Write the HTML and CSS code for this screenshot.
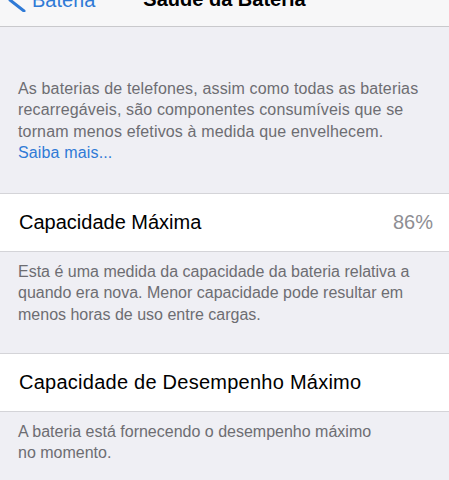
FILE: index.html
```html
<!DOCTYPE html>
<html lang="pt">
<head>
<meta charset="utf-8">
<link rel="stylesheet" href="styles.css">
</head>
<body>
<header class="nav">
  <div class="back">
    <svg class="chev" width="18" height="24" viewBox="0 0 18 24"><path d="M16 1 L2 12 L16 23" fill="none" stroke="#2f7ad6" stroke-width="3" stroke-linecap="round" stroke-linejoin="round"/></svg>
    <span class="back-label">Bateria</span>
  </div>
  <div class="title">Saúde da Bateria</div>
</header>
<main class="content">
  <p class="intro">As baterias de telefones, assim como todas as baterias recarregáveis, são componentes consumíveis que se tornam menos efetivos à medida que envelhecem.<br><span class="link">Saiba mais...</span></p>
  <div class="cell"><span class="cell-label">Capacidade Máxima</span><span class="cell-value">86%</span></div>
  <p class="footer">Esta é uma medida da capacidade da bateria relativa a quando era nova. Menor capacidade pode resultar em menos horas de uso entre cargas.</p>
  <div class="cell"><span class="cell-label wide">Capacidade de Desempenho Máximo</span></div>
  <p class="footer last">A bateria está fornecendo o desempenho máximo<br>no momento.</p>
</main>
</body>
</html>
```
FILE: styles.css
```css
html, body {
  margin: 0;
  padding: 0;
}
body {
  background: #efeff4;
  font-family: "Liberation Sans", Arial, sans-serif;
  width: 449px;
  height: 480px;
  overflow: hidden;
}
.nav {
  height: 26px;
  background: #f7f7f8;
  border-bottom: 1px solid #c9c9cc;
  position: relative;
  display: flex;
  align-items: flex-end;
}
.back {
  display: flex;
  align-items: flex-end;
  margin-left: 8px;
  margin-bottom: 14px;
  color: #2f7ad6;
  font-size: 20px;
  line-height: 20px;
}
.chev {
  display: block;
}
.back-label {
  margin-left: 6px;
  position: relative;
  top: -2px;
}
.title {
  position: absolute;
  left: 0;
  right: 0;
  bottom: 17px;
  text-align: center;
  font-size: 20px;
  line-height: 20px;
  font-weight: bold;
  color: #000;
}
.content {
  display: flex;
  flex-direction: column;
}
.intro {
  margin: 0;
  padding: 51px 24px 30px 18px;
  font-size: 16px;
  letter-spacing: 0.15px;
  line-height: 21.3px;
  color: #6d6d72;
}
.link {
  color: #2f7ad6;
}
.cell {
  background: #fff;
  border-top: 1px solid #d4d4d8;
  border-bottom: 1px solid #d4d4d8;
  height: 57px;
  display: flex;
  align-items: center;
  justify-content: space-between;
  padding: 0 16px 0 19px;
  font-size: 20px;
  color: #000;
}
.cell-label.wide {
  letter-spacing: 0.25px;
}
.cell-value {
  color: #8e8e93;
}
.footer {
  margin: 0;
  padding: 9px 30px 28px 18px;
  font-size: 16px;
  line-height: 21.3px;
  color: #6d6d72;
}
```
